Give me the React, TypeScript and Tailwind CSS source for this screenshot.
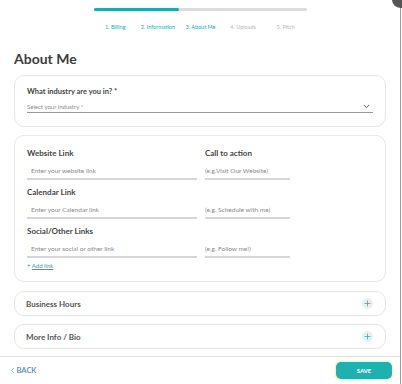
import { ChevronDown, ChevronLeft, Plus } from 'lucide-react';

const steps = [
  { label: '1. Billing', done: true },
  { label: '2. Information', done: true },
  { label: '3. About Me', done: true },
  { label: '4. Uploads', done: false },
  { label: '5. Pitch', done: false },
];

function LineInput({ placeholder, width, inset = true }: { placeholder: string; width: string; inset?: boolean }) {
  return (
    <div className={`${width} ${inset ? 'pl-[4px]' : ''} border-b-2 border-[#d6d6d6] h-[16px] flex items-center`}>
      <span className="text-[6.5px] leading-[8px] text-[#8a8a8a]">{placeholder}</span>
    </div>
  );
}

function Label({ children, className = '' }: { children: React.ReactNode; className?: string }) {
  return <p className={`text-[8px] leading-[10px] font-bold text-[#444] ${className}`}>{children}</p>;
}

function Collapsible({ title }: { title: string }) {
  return (
    <div className="mx-[14px] h-[25px] rounded-[10px] border border-[#e6e6e6] flex items-center justify-between pl-[11px] pr-[12px]">
      <span className="text-[8px] font-bold text-[#555]">{title}</span>
      <div className="w-[11px] h-[11px] rounded-full bg-[#eeeeee] flex items-center justify-center">
        <Plus size={9} strokeWidth={2} className="text-[#1fb0b0]" />
      </div>
    </div>
  );
}

export default function App() {
  return (
    <div className="relative w-[402px] h-[384px] overflow-hidden bg-white font-['Lato',sans-serif]">
      <div className="w-[401px] h-full border-r border-[#9a9a9a] flex flex-col">
        {/* stepper */}
        <div className="pt-[8px] pl-[94px]">
          <div className="w-[213px] h-[3px] rounded-full bg-[#dcdcdc]">
            <div className="w-[85px] h-full rounded-full bg-[#1fa9ad]" />
          </div>
          <div className="w-[213px] grid grid-cols-5 mt-[12px]">
            {steps.map((s) => (
              <span
                key={s.label}
                className={`text-center text-[5.5px] leading-[8px] ${s.done ? 'text-[#1fa9ad]' : 'text-[#b8b8b8]'}`}
              >
                {s.label}
              </span>
            ))}
          </div>
        </div>

        <h1 className="ml-[14px] mt-[18px] text-[14px] leading-[20px] font-bold text-[#3d3d3d]">About Me</h1>

        {/* industry */}
        <div className="mx-[14px] mt-[6px] h-[52px] rounded-[10px] border border-[#e6e6e6] px-[12px] pt-[11px]">
          <p className="text-[7.5px] leading-[10px] font-bold text-[#444]">What industry are you in? *</p>
          <div className="mt-[4px] h-[12px] border-b border-[#9a9a9a] flex items-center justify-between pr-[2px]">
            <span className="text-[6px] leading-[8px] text-[#8a8a8a]">Select your industry *</span>
            <ChevronDown size={9} strokeWidth={2.5} className="text-[#444]" />
          </div>
        </div>

        {/* links */}
        <div className="mx-[14px] mt-[8px] h-[147px] rounded-[10px] border border-[#e6e6e6] px-[12px] pt-[12px]">
          <div className="flex gap-[8px]">
            <div className="w-[170px]">
              <Label>Website Link</Label>
              <div className="mt-[6px]">
                <LineInput placeholder="Enter your website link" width="w-[170px]" />
              </div>
            </div>
            <div>
              <Label>Call to action</Label>
              <div className="mt-[6px]">
                <LineInput placeholder="(e.g.Visit Our Website)" width="w-[85px]" inset={false} />
              </div>
            </div>
          </div>
          <Label className="mt-[7px]">Calendar Link</Label>
          <div className="mt-[6px] flex gap-[8px]">
            <LineInput placeholder="Enter your Calendar link" width="w-[170px]" />
            <LineInput placeholder="(e.g. Schedule with me)" width="w-[85px]" inset={false} />
          </div>
          <Label className="mt-[7px]">Social/Other Links</Label>
          <div className="mt-[6px] flex gap-[8px]">
            <LineInput placeholder="Enter your social or other link" width="w-[170px]" />
            <LineInput placeholder="(e.g. Follow me!)" width="w-[85px]" inset={false} />
          </div>
          <p className="mt-[4px] text-[6px] leading-[8px] text-[#1fa9ad]">
            + <span className="underline">Add link</span>
          </p>
        </div>

        <div className="mt-[9px]">
          <Collapsible title="Business Hours" />
        </div>
        <div className="mt-[8px]">
          <Collapsible title="More Info / Bio" />
        </div>

        {/* footer */}
        <div className="mt-[7px] flex-1 border-t border-[#e0e0e0] flex items-center justify-between pl-[8px] pr-[8px]">
          <button className="flex items-center text-[7.5px] font-bold text-[#6b95a8]">
            <ChevronLeft size={9} strokeWidth={2} className="-mr-[0.5px]" />
            BACK
          </button>
          <button className="w-[56px] h-[17px] rounded-[5px] bg-[#1fb0b0] text-white text-[6px] font-bold shadow-[0_0_0_1.5px_#fbf3c0]">
            SAVE
          </button>
        </div>
      </div>
      <div className="absolute -top-[9px] -right-[7px] w-[17px] h-[17px] rounded-full bg-[#555]" />
    </div>
  );
}
